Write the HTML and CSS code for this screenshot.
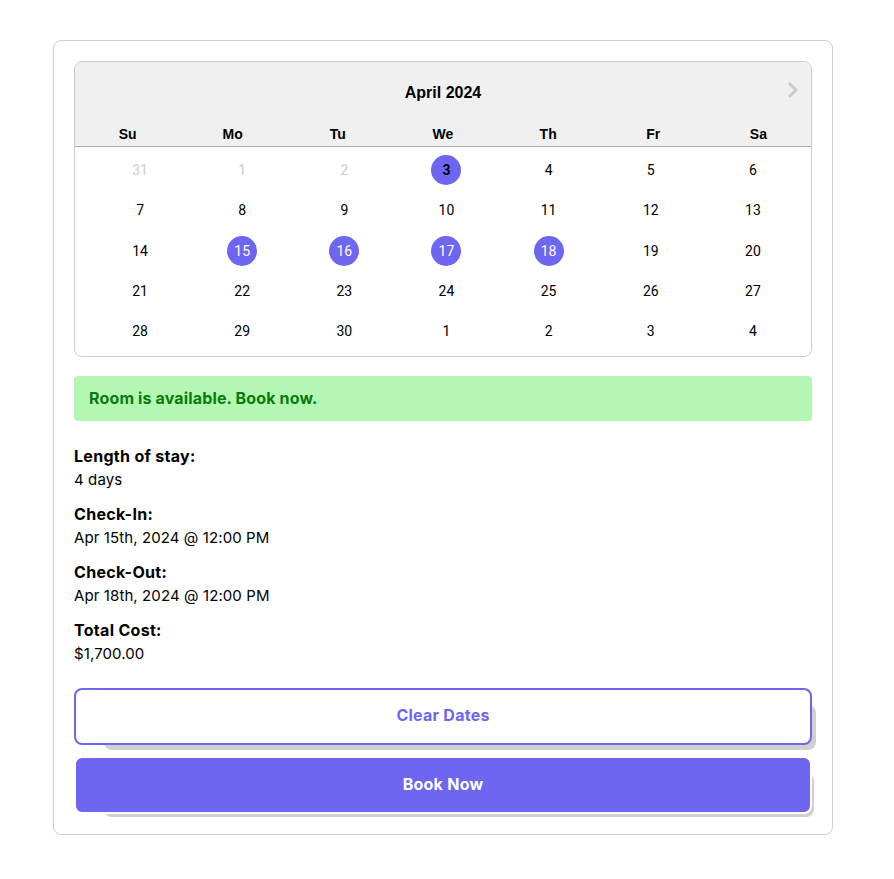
FILE: index.html
```html
<!DOCTYPE html>
<html lang="en">
<head>
<meta charset="utf-8">
<title>Booking</title>
<link rel="stylesheet" href="styles.css">
</head>
<body>
<div class="card">
  <div class="calendar">
    <div class="cal-header">
      <div class="cal-title">April 2024</div>
      <button class="nav-next" aria-label="Next month">
        <svg width="12" height="18" viewBox="0 0 12 18"><polyline points="2,2 9,9 2,16" fill="none" stroke="#cccccc" stroke-width="3"/></svg>
      </button>
      <div class="day-names">
        <span>Su</span><span>Mo</span><span>Tu</span><span>We</span><span>Th</span><span>Fr</span><span>Sa</span>
      </div>
    </div>
    <div class="days">
      <span class="day muted">31</span><span class="day muted">1</span><span class="day muted">2</span><span class="day"><b class="dot today">3</b></span><span class="day">4</span><span class="day">5</span><span class="day">6</span>
      <span class="day">7</span><span class="day">8</span><span class="day">9</span><span class="day">10</span><span class="day">11</span><span class="day">12</span><span class="day">13</span>
      <span class="day">14</span><span class="day"><b class="dot sel">15</b></span><span class="day"><b class="dot sel">16</b></span><span class="day"><b class="dot sel">17</b></span><span class="day"><b class="dot sel">18</b></span><span class="day">19</span><span class="day">20</span>
      <span class="day">21</span><span class="day">22</span><span class="day">23</span><span class="day">24</span><span class="day">25</span><span class="day">26</span><span class="day">27</span>
      <span class="day">28</span><span class="day">29</span><span class="day">30</span><span class="day">1</span><span class="day">2</span><span class="day">3</span><span class="day">4</span>
    </div>
  </div>

  <div class="alert">Room is available. Book now.</div>

  <div class="details">
    <div class="group"><div class="label">Length of stay:</div><div class="value">4 days</div></div>
    <div class="group"><div class="label">Check-In:</div><div class="value">Apr 15th, 2024 @ 12:00 PM</div></div>
    <div class="group"><div class="label">Check-Out:</div><div class="value">Apr 18th, 2024 @ 12:00 PM</div></div>
    <div class="group"><div class="label">Total Cost:</div><div class="value">$1,700.00</div></div>
  </div>

  <div class="actions">
    <button class="btn btn-outline">Clear Dates</button>
    <button class="btn btn-primary">Book Now</button>
  </div>
</div>
</body>
</html>
```

FILE: styles.css
```css
* { box-sizing: border-box; }
body {
  margin: 0;
  background: #ffffff;
  font-family: Inter, "Noto Sans", sans-serif;
  color: #000;
}
.card {
  width: 780px;
  margin: 40px 0 0 53px;
  border: 1px solid #cfcfcf;
  border-radius: 8px;
  padding: 20px;
}
.calendar {
  border: 1px solid #cccccc;
  border-radius: 8px;
  overflow: hidden;
}
.cal-header {
  position: relative;
  background: #f0f0f0;
  border-bottom: 1px solid #aeaeae;
  padding-top: 20px;
  height: 85px;
}
.cal-title {
  text-align: center;
  font-family: "Liberation Sans", Arial, sans-serif;
  font-weight: bold;
  font-size: 16px;
  line-height: 22px;
}
.nav-next {
  position: absolute;
  top: 19px;
  right: 12px;
  border: 0;
  background: none;
  padding: 0;
  width: 12px;
  height: 18px;
}
.day-names {
  display: grid;
  grid-template-columns: repeat(7, 1fr);
  margin-top: 18px;
  font-family: "Liberation Sans", Arial, sans-serif;
  font-weight: bold;
  font-size: 14px;
  line-height: 24px;
  text-align: center;
}
.days {
  display: grid;
  grid-template-columns: repeat(7, 1fr);
  grid-auto-rows: 40.25px;
  padding: 3px 7px 5px 14px;
  font-family: Roboto, sans-serif;
  font-size: 14px;
}
.day {
  display: flex;
  align-items: center;
  justify-content: center;
}
.day.muted { color: #cccccc; }
.dot {
  width: 30px;
  height: 30px;
  border-radius: 50%;
  background: #6e66f0;
  display: flex;
  align-items: center;
  justify-content: center;
  font-weight: normal;
}
.dot.today { font-weight: bold; color: #000; }
.dot.sel { color: #fff; }
.alert {
  margin-top: 19px;
  background: #b3f7b3;
  color: #0a7a0a;
  border-radius: 4px;
  padding: 10px 15px 11px;
  font-weight: 700;
  font-size: 16px;
  line-height: 24px;
  letter-spacing: 0.15px;
}
.details {
  margin-top: 23px;
  display: flex;
  flex-direction: column;
  gap: 10px;
}
.label {
  font-weight: 700;
  font-size: 16px;
  line-height: 24px;
  letter-spacing: 0.3px;
}
.value {
  font-size: 15px;
  line-height: 24px;
  letter-spacing: 0.1px;
}
.actions {
  position: relative;
  z-index: 0;
  margin-top: 22px;
  display: flex;
  flex-direction: column;
  gap: 11px;
}
.btn {
  position: relative;
  width: 100%;
  border-radius: 8px;
  padding: 0 0 3px;
  font-family: Inter, "Noto Sans", sans-serif;
  font-weight: 700;
  font-size: 16px;
  letter-spacing: 0.25px;
  cursor: pointer;
}
.btn::before {
  content: "";
  position: absolute;
  left: 28px;
  top: 15px;
  right: -6px;
  bottom: -7px;
  background: #d0d0d0;
  border-radius: 8px;
  z-index: -1;
}
.btn-outline {
  height: 57px;
  background: #fff;
  border: 2px solid #6e66f0;
  color: #6e66f0;
}
.btn-primary {
  height: 58px;
  background: #6e66f0;
  border: 2px solid #fff;
  color: #fff;
}
.btn-primary::before { right: -4px; bottom: -5px; }
```
